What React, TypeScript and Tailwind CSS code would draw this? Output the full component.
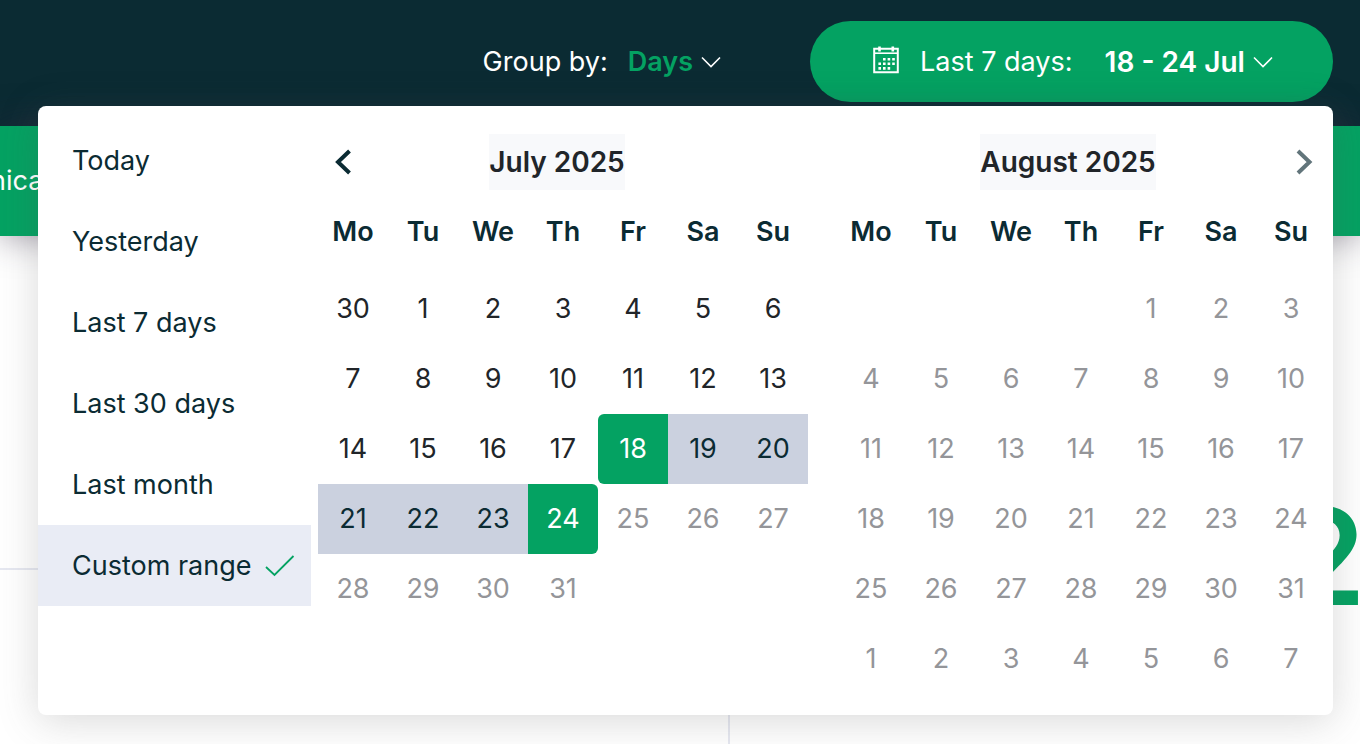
import { useState } from 'react';
import clsx from 'clsx';

const PRESETS = ['Today', 'Yesterday', 'Last 7 days', 'Last 30 days', 'Last month', 'Custom range'];
const WEEKDAYS = ['Mo', 'Tu', 'We', 'Th', 'Fr', 'Sa', 'Su'];

// 0 stands for an empty cell
const JULY = [
  [30, 1, 2, 3, 4, 5, 6],
  [7, 8, 9, 10, 11, 12, 13],
  [14, 15, 16, 17, 18, 19, 20],
  [21, 22, 23, 24, 25, 26, 27],
  [28, 29, 30, 31, 0, 0, 0],
];

const AUGUST = [
  [0, 0, 0, 0, 1, 2, 3],
  [4, 5, 6, 7, 8, 9, 10],
  [11, 12, 13, 14, 15, 16, 17],
  [18, 19, 20, 21, 22, 23, 24],
  [25, 26, 27, 28, 29, 30, 31],
  [1, 2, 3, 4, 5, 6, 7],
];

const RANGE_START = 18;
const RANGE_END = 24;

type DayState = 'start' | 'end' | 'range' | 'enabled' | 'disabled';

function getJulyState(day: number, week: number): DayState {
  if (week === 0) return 'enabled';
  if (day === RANGE_START) return 'start';
  if (day === RANGE_END) return 'end';
  if (day > RANGE_END) return 'disabled';
  return day > RANGE_START ? 'range' : 'enabled';
}

function ChevronDown() {
  return (
    <svg className="pointer-events-none h-3 w-5 shrink-0" viewBox="0 0 20 12" fill="none" stroke="white" strokeWidth="1.6" aria-hidden="true">
      <path d="M1 1.5 10 10.5 19 1.5" />
    </svg>
  );
}

function CalendarIcon() {
  return (
    <svg className="mb-1 h-7 w-7 shrink-0" viewBox="0 0 28 28" fill="none" stroke="white" aria-hidden="true">
      <path d="M2.2 2.7H25.8V26.3H2.2Z" strokeWidth="2" />
      <path d="M3 7.2H25" strokeWidth="1.6" />
      <path d="M7.5 0.5V5.5 M20.8 0.5V5.5" strokeWidth="2.6" />
      <path
        d="M11 13.2H22.8 M6.4 17.8H22.8 M6.4 22.4H18.2"
        strokeWidth="2.6"
        strokeDasharray="2.6 2"
      />
    </svg>
  );
}

function CheckIcon() {
  return (
    <svg className="h-6 w-8" viewBox="0 0 32 24" fill="none" stroke="#04a262" strokeWidth="1.8" aria-hidden="true">
      <path d="M2 13 10.5 21 29.5 2" />
    </svg>
  );
}

interface MonthProps {
  title: string;
  weeks: number[][];
  direction: 'previous' | 'next';
  getState: (day: number, week: number) => DayState;
}

function Month({ title, weeks, direction, getState }: MonthProps) {
  const isPrevious = direction === 'previous';

  const arrow = (
    <button type="button" aria-label={`Show ${direction} month`} className="flex h-14 items-center justify-center">
      <svg
        className={clsx('h-7 w-5', isPrevious ? 'text-[#0b2b33]' : 'text-[#62757b]')}
        viewBox="0 0 20 28"
        fill="none"
        stroke="currentColor"
        strokeWidth="4"
        aria-hidden="true"
      >
        <path d={isPrevious ? 'M16.5 3 5 14 16.5 25' : 'M4 3 15.5 14 4 25'} />
      </svg>
    </button>
  );

  return (
    <section className="w-[490px]">
      <div className={clsx('grid', isPrevious ? 'grid-cols-[50px_1fr_62px]' : 'grid-cols-[18px_1fr_44px]')}>
        {isPrevious ? arrow : <span />}
        <h2 className="justify-self-center bg-[#f8f9fb] text-[28px] leading-[56px] font-semibold text-[#212529]">{title}</h2>
        {isPrevious ? <span /> : arrow}
      </div>

      <table className="w-full table-fixed border-collapse" aria-label={title}>
        <thead>
          <tr className="h-[84px]">
            {WEEKDAYS.map((name) => (
              <th key={name} scope="col" className="p-0 text-center font-semibold">
                {name}
              </th>
            ))}
          </tr>
        </thead>
        <tbody>
          {weeks.map((week, weekIdx) => (
            <tr key={weekIdx}>
              {week.map((day, dayIdx) => {
                if (day === 0) return <td key={dayIdx} />;
                const state = getState(day, weekIdx);
                return (
                  <td key={dayIdx} className="p-0">
                    <button
                      type="button"
                      disabled={state === 'disabled'}
                      className={clsx(
                        'flex h-[70px] w-full items-center justify-center',
                        state === 'enabled' && 'text-[#212529]',
                        state === 'disabled' && 'text-[#949599]',
                        state === 'range' && 'bg-[#cbd1df]',
                        state === 'start' && 'rounded-l-md bg-[#04a262] text-white',
                        state === 'end' && 'rounded-r-md bg-[#04a262] text-white'
                      )}
                    >
                      {day}
                    </button>
                  </td>
                );
              })}
            </tr>
          ))}
        </tbody>
      </table>
    </section>
  );
}

function DateRangePanel() {
  const [preset, setPreset] = useState('Custom range');

  return (
    <div className="absolute top-[106px] right-[27px] flex overflow-hidden rounded-lg bg-white pr-[7px] shadow-[0_6px_40px_rgba(80,80,80,0.22)]">
      <div className="w-[273px] pt-3.5">
        {PRESETS.map((name) => (
          <button
            key={name}
            type="button"
            onClick={() => setPreset(name)}
            className={clsx(
              'flex h-[81px] w-full items-center gap-3 pl-[34px] whitespace-nowrap',
              name === preset && 'bg-[#e9ecf5]'
            )}
          >
            {name}
            {name === preset && <CheckIcon />}
          </button>
        ))}
      </div>
      <div className="flex gap-7 pt-7 pb-[21px] pl-[7px]">
        <Month title="July 2025" weeks={JULY} direction="previous" getState={getJulyState} />
        <Month title="August 2025" weeks={AUGUST} direction="next" getState={() => 'disabled'} />
      </div>
    </div>
  );
}

export default function App() {
  return (
    <div className="relative flex min-h-screen flex-col overflow-hidden bg-white font-['Inter',sans-serif] text-[27px] leading-8 text-[#0b2b33]">
      <header className="flex h-[126px] items-start justify-end bg-[#0b2b33] pt-[21px] pr-[27px] text-white">
        <div className="mr-[89px] flex h-[81px] items-center">
          <label htmlFor="group-by" className="mr-5">
            Group by:
          </label>
          <select
            id="group-by"
            defaultValue="Days"
            className="mr-2 field-sizing-content appearance-none bg-transparent font-semibold text-[#04a262]"
          >
            <option>Days</option>
            <option>Weeks</option>
            <option>Months</option>
          </select>
          <ChevronDown />
        </div>
        <button type="button" aria-expanded="true" className="flex h-[81px] w-[523px] items-center justify-center rounded-full bg-[#04a262] pl-0.5">
          <CalendarIcon />
          <span className="ml-5">Last 7 days:</span>
          <span className="mr-2 ml-8 text-[28px] font-semibold">18 - 24 Jul</span>
          <ChevronDown />
        </button>
      </header>

      <nav className="z-0 flex h-[110px] items-center bg-[#04a262] text-white shadow-[0_0_36px_rgba(50,40,65,0.5)]">
        <a href="#" className="-ml-2.5">
          nica
        </a>
      </nav>

      <main className="flex flex-1">
        <div className="w-[730px] border-r-2 border-[#e6e8f1]">
          <div className="h-[334px] border-b-2 border-[#e6e8f1]" />
        </div>
        <div className="-mr-1.5 flex flex-1 items-center justify-end pt-[132px] text-[134px] leading-none font-semibold text-[#04a262]">
          2
        </div>
      </main>

      <DateRangePanel />
    </div>
  );
}
